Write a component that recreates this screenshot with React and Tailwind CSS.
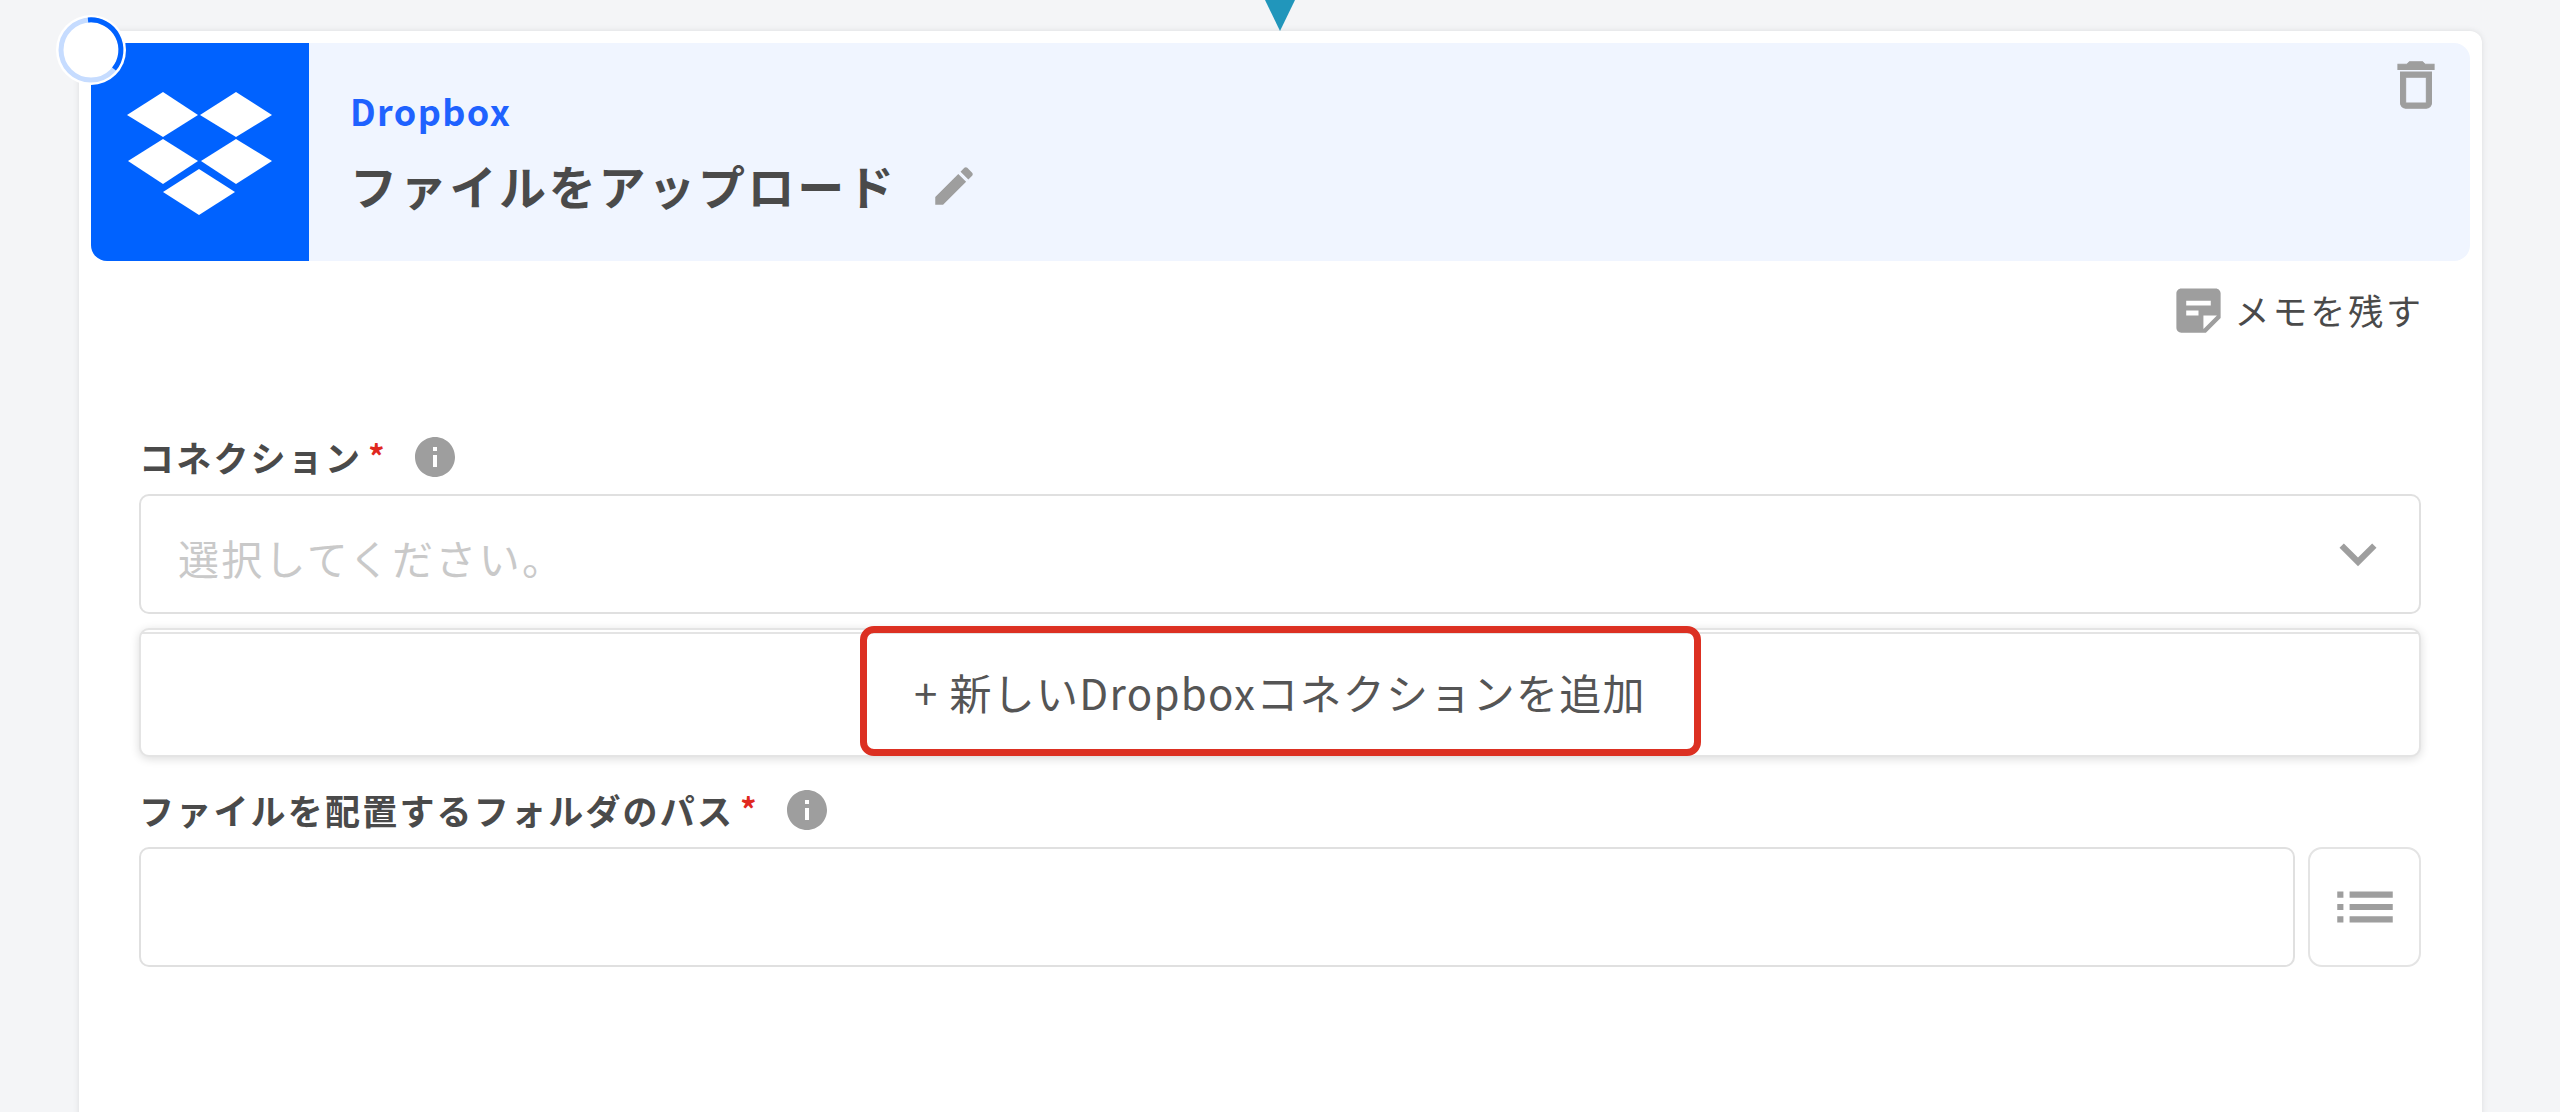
const FONT = "font-['Noto_Sans_CJK_JP','Noto_Sans',sans-serif]";

function Mat({ d, size, className }) {
  return (
    <svg viewBox="0 0 24 24" width={size} height={size} className={className} fill="#9e9e9e">
      <path d={d} />
    </svg>
  );
}

const INFO = "M12 2C6.48 2 2 6.48 2 12s4.48 10 10 10 10-4.48 10-10S17.52 2 12 2zm1 15h-2v-6h2v6zm0-8h-2V7h2v2z";

function Label({ text }) {
  return (
    <div className="flex items-center h-[40px] mb-[17px]">
      <span className="text-[35px] leading-[40px] font-bold tracking-[2.2px] text-[#4a4a4a]">{text}</span>
      <span className="self-start ml-[6px] text-[#e0281f] text-[32px] leading-[36px] font-bold">*</span>
      <Mat d={INFO} size={48} className="ml-[27px] shrink-0" />
    </div>
  );
}

export default function App() {
  return (
    <div className={`relative h-[1112px] overflow-hidden bg-[#f4f5f7] pl-[79px] pr-[78px] pt-[31px] ${FONT}`}>
      <svg className="absolute left-[1265px] top-0" width="30" height="32" viewBox="0 0 30 32">
        <path d="M0 0H30L15 31Z" fill="#2196bb" />
      </svg>

      <svg className="absolute left-[55px] top-[14px] z-10" width="72" height="72" viewBox="0 0 72 72">
        <circle cx="36" cy="36" r="35" fill="#ffffff" />
        <circle cx="36" cy="36" r="30" fill="none" stroke="#c6dcff" strokeWidth="5" />
        <path d="M33 6A30 30 0 0 1 59 55" fill="none" stroke="#0062ff" strokeWidth="5" />
      </svg>

      <div className="h-[1100px] rounded-t-[12px] bg-white shadow-[0_0_6px_rgba(0,0,0,0.1)] px-[12px] pt-[12px]">
        <div className="relative flex h-[218px] rounded-[16px] bg-[#f0f5ff] overflow-hidden">
          <div className="flex h-[218px] w-[218px] shrink-0 items-center justify-center bg-[#0062ff]">
            <svg width="218" height="218" viewBox="91 43 218 218" fill="#ffffff">
              <path d="M127 115L163 92L198 115L163 137Z" />
              <path d="M200 115L236 92L272 115L236 137Z" />
              <path d="M128 161L163 139L198 161L163 184Z" />
              <path d="M201 161L236 139L272 161L236 184Z" />
              <path d="M163 192L199 169L235 192L199 215Z" />
            </svg>
          </div>
          <div className="pl-[41px] pt-[42px]">
            <div className="text-[36px] leading-[50px] font-bold tracking-[1.4px] text-[#1f62ff]">Dropbox</div>
            <div className="mt-[18px] flex items-center">
              <span className="text-[47px] leading-[64px] font-bold tracking-[2.7px] text-[#4a4a4a]">ファイルをアップロード</span>
              <Mat
                d="M3 17.25V21h3.75L17.81 9.94l-3.75-3.75L3 17.25zM20.71 7.04c.39-.39.39-1.02 0-1.41l-2.34-2.34c-.39-.39-1.02-.39-1.41 0l-1.83 1.83 3.75 3.75 1.83-1.83z"
                size={50}
                className="ml-[32px] mt-[1px]"
              />
            </div>
          </div>
          <Mat
            d="M6 19c0 1.1.9 2 2 2h8c1.1 0 2-.9 2-2V7H6v12zM8 9h8v10H8V9zm7.5-5l-1-1h-5l-1 1H5v2h14V4z"
            size={62}
            className="absolute right-[23px] top-[11px] stroke-[#9e9e9e] stroke-[0.4]"
          />
        </div>

        <div className="pl-[48px] pr-[49px]">
          <div className="mt-[27px] flex h-[44px] items-center justify-end">
            <Mat
              d="M19 3H4.99C3.89 3 3 3.9 3 5l.01 14c0 1.1.89 2 1.99 2h10l6-6V5c0-1.1-.9-2-2-2zM7 8h10v2H7V8zm5 6H7v-2h5v2zm2 5.5V14h5.5L14 19.5z"
              size={59}
              className="shrink-0"
            />
            <span className="-mr-[3px] ml-[6px] text-[35px] leading-[44px] tracking-[2.9px] text-[#4a4a4a]">メモを残す</span>
          </div>

          <div className="mt-[105px]">
            <Label text="コネクション" />
            <div className="flex h-[120px] items-center justify-between rounded-[10px] border-2 border-[#e0e0e0] bg-white pl-[37px] pr-[24px]">
              <span className="pt-[6px] text-[41px] leading-[56px] tracking-[2.3px] text-[#c9c9c9]">選択してください。</span>
              <Mat d="M16.59 8.59L12 13.17 7.41 8.59 6 10l6 6 6-6z" size={74} className="shrink-0" />
            </div>
            <div className="relative mt-[14px] h-[129px] rounded-[10px] border-2 border-[#e4e4e4] bg-white shadow-[0_2px_10px_rgba(0,0,0,0.14)]">
              <div className="mt-[2px] flex h-[123px] items-center justify-center border-t-2 border-[#e4e4e4] pb-[6px] text-[42px] leading-[56px] tracking-[1.3px] text-[#555555]">
                + 新しいDropboxコネクションを追加
              </div>
              <div className="absolute left-[719px] top-[-4px] h-[130px] w-[841px] rounded-[14px] border-[7px] border-[#dc3022]" />
            </div>
          </div>

          <div className="mt-[33px]">
            <Label text="ファイルを配置するフォルダのパス" />
            <div className="flex h-[120px] gap-[13px]">
              <div className="flex-1 rounded-[10px] border-2 border-[#e0e0e0] bg-white" />
              <div className="flex w-[113px] items-center justify-center rounded-[14px] border-2 border-[#e4e4e4] bg-white">
                <Mat d="M3 13h2v-2H3v2zm0 4h2v-2H3v2zm0-8h2V7H3v2zm4 4h14v-2H7v2zm0 4h14v-2H7v2zM7 7v2h14V7H7z" size={74} />
              </div>
            </div>
          </div>
        </div>
      </div>
    </div>
  );
}
